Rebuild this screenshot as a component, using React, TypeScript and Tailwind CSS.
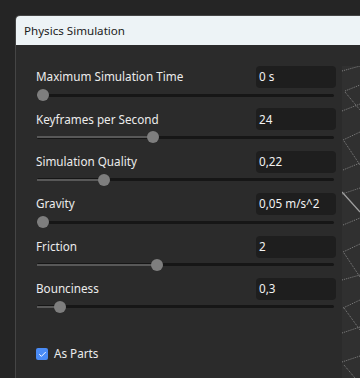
import { Check } from "lucide-react";

const rows = [
  { label: "Maximum Simulation Time", value: "0 s", pct: 0 },
  { label: "Keyframes per Second", value: "24", pct: 38.6 },
  { label: "Simulation Quality", value: "0,22", pct: 21.4 },
  { label: "Gravity", value: "0,05 m/s^2", pct: 0 },
  { label: "Friction", value: "2", pct: 40 },
  { label: "Bounciness", value: "0,3", pct: 6 },
];

function Slider({ pct }: { pct: number }) {
  return (
    <div className="relative h-[14px] w-full">
      <div className="absolute left-0 right-0 top-[5.5px] h-[3px] rounded-sm bg-[#161616]" />
      <div
        className="absolute left-0 top-[6px] h-[2px] bg-[#585858]"
        style={{ width: `calc(6px + ${pct} * (100% - 12px) / 100)` }}
      />
      <div
        className="absolute top-[1px] h-[12px] w-[12px] rounded-full bg-[#7e7e7e]"
        style={{ left: `calc(${pct} * (100% - 12px) / 100)` }}
      />
    </div>
  );
}

function Viewport() {
  const dotted = [
    [0, 5, 18, 0],
    [3, 25, 18, 19],
    [3, 26, 18, 44],
    [0, 45, 18, 38],
    [1, 74, 18, 66],
    [2, 75, 18, 99],
    [1, 104, 18, 97],
    [1, 159, 18, 152],
    [1, 186, 18, 178],
    [2, 187, 18, 211],
    [0, 214, 18, 209],
    [1, 242, 18, 234],
    [2, 242, 18, 264],
    [0, 267, 18, 261],
    [0, 296, 18, 290],
    [2, 299, 13, 312],
  ];
  return (
    <div className="h-full w-full bg-[#303030]">
      <svg width="18" height="312" viewBox="0 0 18 312">
        {dotted.map(([x1, y1, x2, y2], i) => (
          <line
            key={i}
            x1={x1}
            y1={y1}
            x2={x2}
            y2={y2}
            stroke="#828282"
            strokeWidth="1"
            strokeDasharray="1 1"
          />
        ))}
        <line x1="0" y1="126" x2="18" y2="146" stroke="#a0a0a0" strokeWidth="1.2" />
        <line x1="0" y1="128" x2="18" y2="122" stroke="#7a7a7a" strokeWidth="1" strokeDasharray="1 1" />
      </svg>
    </div>
  );
}

export default function App() {
  return (
    <div
      className="h-[378px] w-[360px] overflow-hidden bg-[#252525] pl-[15px] pt-[15px]"
      style={{ fontFamily: '"Noto Sans", "Open Sans", sans-serif' }}
    >
      <div className="flex h-full flex-col rounded-tl-[5px] border-l border-t border-[#454545] bg-[#2b2b2b]">
        <div className="flex h-[29px] items-center rounded-tl-[4px] bg-[#edf3f6] pl-[8px] text-[11.6px] text-[#1b1b1b]">
          Physics Simulation
        </div>
        <div className="flex flex-1 pt-[21px]">
          <div className="w-[326px] pl-[20px] pr-[6px]">
            {rows.map((r) => (
              <div key={r.label} className="h-[42.4px]">
                <div className="flex h-[22px] items-center justify-between">
                  <span className="text-[11.7px] text-[#ececec]">{r.label}</span>
                  <div className="flex h-[22px] w-[80px] items-center rounded-[4px] bg-[#1e1e1e] pl-[3px] text-[11.7px] text-[#f2f2f2]">
                    {r.value}
                  </div>
                </div>
                <div className="pl-[1px] pr-[2px]">
                  <Slider pct={r.pct} />
                </div>
              </div>
            ))}
            <div className="mt-[25px] flex items-center gap-[6px]">
              <div className="flex h-[12px] w-[12px] items-center justify-center rounded-[2px] bg-[#4a8bf5]">
                <Check className="h-[9px] w-[9px] text-white" strokeWidth={2.5} />
              </div>
              <span className="text-[11.7px] text-[#ececec]">As Parts</span>
            </div>
          </div>
          <div className="flex-1">
            <Viewport />
          </div>
        </div>
      </div>
    </div>
  );
}
